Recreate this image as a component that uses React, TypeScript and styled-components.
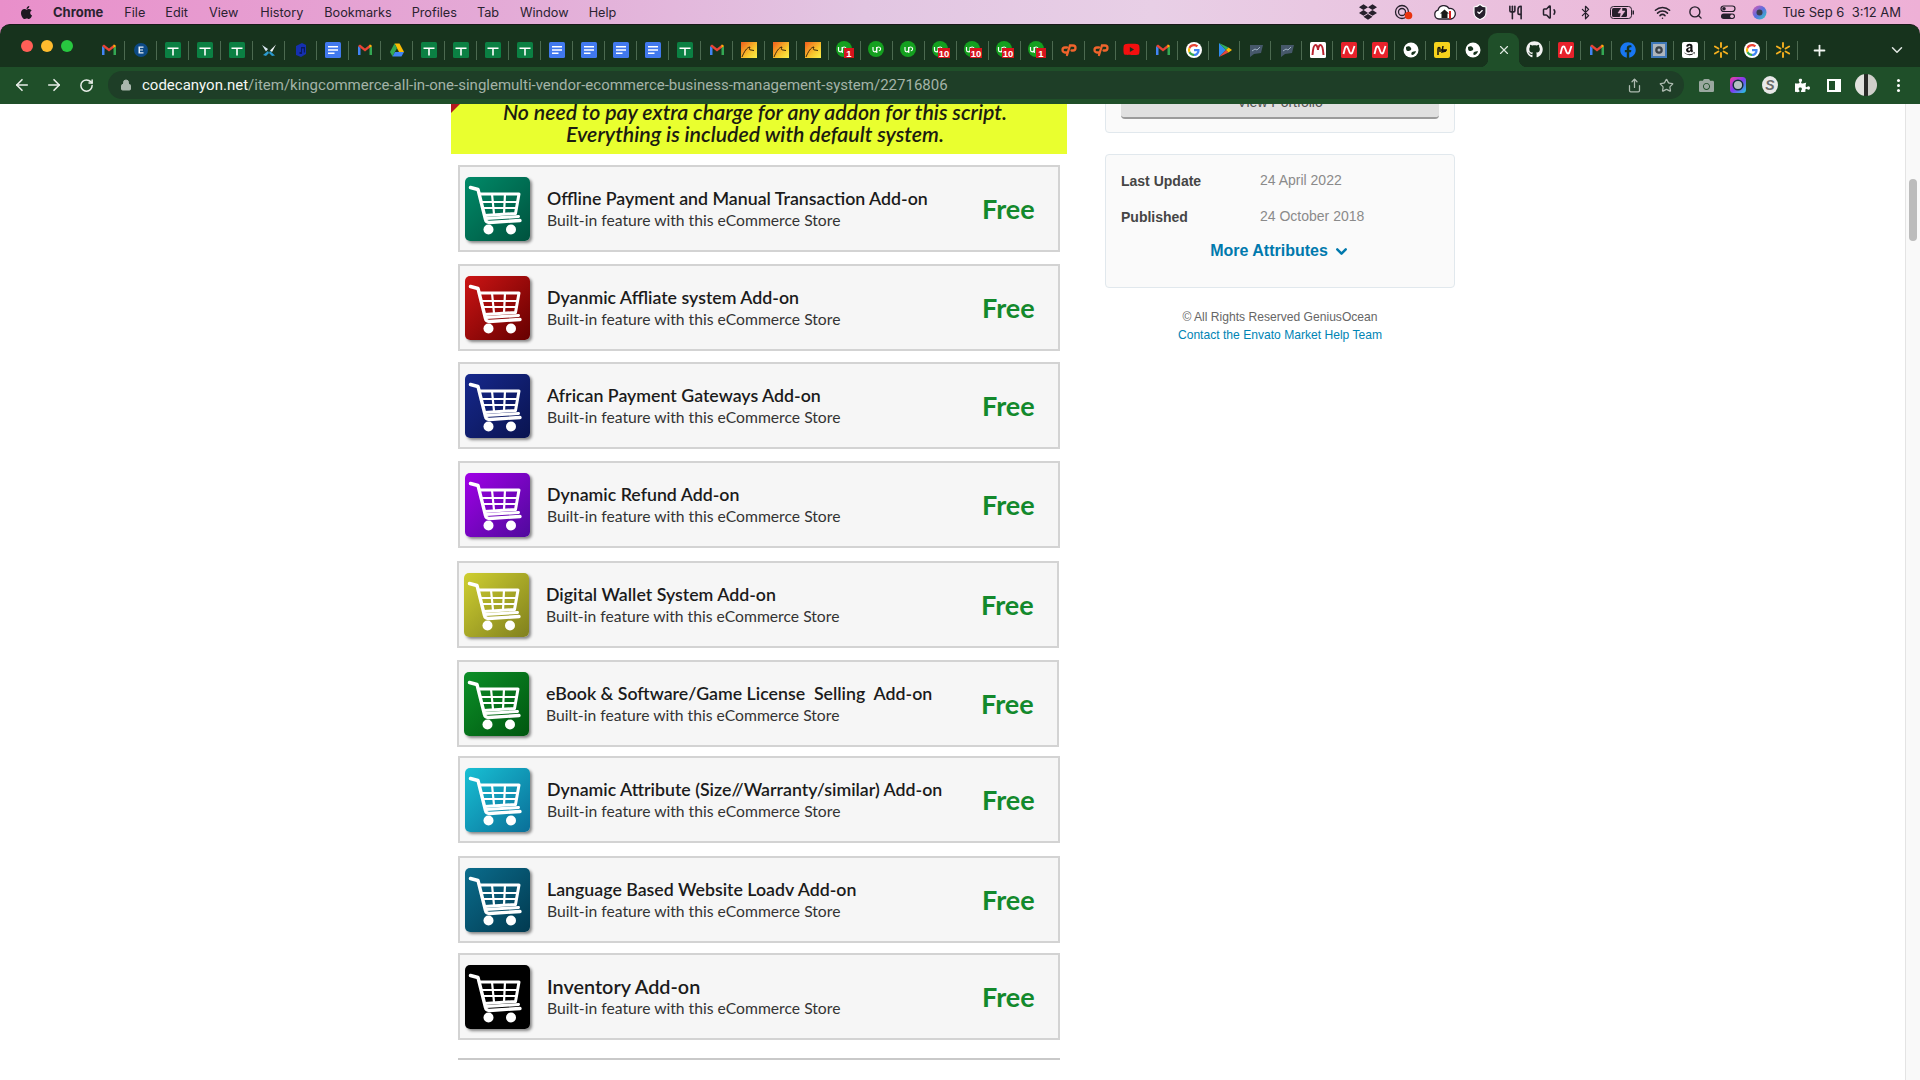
import React from "react";
import styled, { createGlobalStyle } from "styled-components";
import { FaApple, FaDropbox, FaGithub, FaFacebook, FaAmazon, FaYoutube, FaPuzzlePiece, FaCamera } from "react-icons/fa";
import { ArrowLeft, ArrowRight, RotateCw, Lock, Share, Star, Search, Bluetooth, Volume1, Wifi, X, Plus, ChevronDown, Utensils, ShieldCheck } from "lucide-react";

const Global = createGlobalStyle`
  html, body { margin: 0; padding: 0; background: #fff; overflow: hidden; }
  #root { width: 1920px; height: 1080px; overflow: hidden; }
  * { box-sizing: border-box; }
`;

const Screen = styled.div`
  width: 1920px; height: 1080px; display: flex; flex-direction: column; overflow: hidden;
  background: linear-gradient(90deg, #e98fca 0%, #e4a9d6 25%, #e2c6e2 45%, #e8cfe6 60%, #ebbada 85%, #eeb0d6 100%);
`;
const MenuBar = styled.div`
  height: 24px; flex: none; display: flex; align-items: center; padding-left: 19px;
  font: 400 12.7px Inter, "Liberation Sans", sans-serif; color: #2a2230;
`;
const MenuItem = styled.span<{ $bold?: boolean; $gap: number }>`
  margin-left: ${p => p.$gap}px; font-weight: ${p => (p.$bold ? 700 : 400)}; font-size: ${p => (p.$bold ? 13 : 12.7)}px; white-space: nowrap;
`;
const MenuRight = styled.div`
  margin-left: auto; display: flex; align-items: center; padding-right: 19px;
`;
const MenuSlot = styled.span<{ $gap: number }>`
  width: 30px; margin-left: ${p => p.$gap}px; flex: none; display: flex; justify-content: center; align-items: center; color: #26202c;
`;
const Clock = styled.span`
  margin-left: 8px; font-size: 13px; white-space: pre;
`;
const Window = styled.div`
  flex: none; height: 80px; background: #17331d; border-top: 1px solid #1a1a1a; border-radius: 10px 10px 0 0; display: flex; flex-direction: column;
`;
const TabStrip = styled.div`
  height: 42px; flex: none; display: flex; align-items: stretch; padding-left: 21px;
`;
const Lights = styled.div`
  width: 72px; flex: none; display: flex; gap: 8px; padding-top: 15px;
`;
const Light = styled.span<{ $c: string }>`
  width: 12px; height: 12px; border-radius: 50%; background: ${p => p.$c};
`;
const Tab = styled.div<{ $w: number; $active?: boolean; $sep?: boolean }>`
  width: ${p => p.$w}px; flex: none; display: flex; align-items: center; justify-content: center; padding-top: ${p => (p.$active ? 8 : 7)}px; position: relative; color: #dfe8e0;
  ${p => p.$sep && `&:after{content:"";position:absolute;right:0;top:16px;height:19px;width:1px;background:#4c6a50;}`}
  ${p => p.$active && `
    background:#1f4f29;border-radius:9px 9px 0 0;margin-top:8px;padding-top:0;
    &:before,&:after{content:"";position:absolute;bottom:0;width:8px;height:8px;}
    &:before{left:-8px;background:radial-gradient(circle at 0 0,transparent 8px,#1f4f29 8.5px);}
    &:after{right:-8px;background:radial-gradient(circle at 100% 0,transparent 8px,#1f4f29 8.5px);}
  `}
`;
const NewTab = styled.div`
  margin-left: 13px; padding-top: 8px; display: flex; align-items: center; color: #f2f5f2;
`;
const StripEnd = styled.div`
  margin-left: auto; padding: 8px 14px 0 0; display: flex; align-items: center; color: #e2e8e3;
`;
const Toolbar = styled.div`
  height: 37px; flex: none; background: #1f4f29; display: flex; align-items: center; padding: 0 0 1px 6px; color: #e9eee9;
`;
const ToolBtn = styled.span`
  width: 32px; flex: none; display: flex; justify-content: center; align-items: center;
`;
const Omnibox = styled.div`
  width: 1576px; height: 28px; margin: 0 6px 0 6px; flex: none; background: #1e3e27; border-radius: 14px; display: flex; align-items: center; padding-left: 12px; color: #a9b7ad;
  font: 400 15px Roboto, "Liberation Sans", sans-serif;
`;
const UrlHost = styled.span` color: #f4f7f4; margin-left: 10px; `;
const UrlPath = styled.span` color: #a4b3a8; `;
const OmniIcons = styled.div` margin-left: auto; display: flex; padding-right: 2px; color: #aebbb1; `;
const Page = styled.div`
  flex: 1; min-height: 0; background: #fff; display: flex; overflow: hidden;
`;
const MainCol = styled.div`
  width: 616px; margin: -20px 0 0 451px; flex: none; display: flex; flex-direction: column;
`;
const Banner = styled.div`
  height: 70px; position: relative; background: #e9ff2f; display: flex; flex-direction: column; justify-content: flex-end; padding: 0 8px 9px 0;
  font: italic 600 21.3px/22px Lato, "Liberation Sans", sans-serif; color: #1c1c10; text-align: center;
`;
const Ribbon = styled.span`
  position: absolute; left: 0; top: 20px; width: 0; height: 0; border-top: 9px solid #b3171f; border-right: 9px solid transparent;
`;
const Card = styled.div<{ $top: number; $left: number }>`
  width: 602px; height: 87px; flex: none; margin: ${p => p.$top}px 0 0 ${p => 7 - p.$left}px; border: 2px solid #d3d3d3; background: #f6f6f6;
  display: flex; align-items: flex-start; padding: 10px 0 0 5px;
`;
const IconTile = styled.div<{ $from: string; $to: string }>`
  width: 65px; height: 64px; flex: none; border-radius: 5px; background: linear-gradient(135deg, ${p => p.$from}, ${p => p.$to});
  box-shadow: 2px 2px 3px rgba(0,0,0,.45); display: flex;
`;
const CardText = styled.div`
  flex: 1; margin-left: 17px; padding-top: 10px; font-family: Lato, "Liberation Sans", sans-serif;
`;
const CardTitle = styled.div<{ $size: number }>`
  font-size: ${p => p.$size}px; line-height: 22px; font-weight: 600; color: #1b1b1b; white-space: pre;
`;
const CardSub = styled.div`
  font-size: 15.7px; line-height: 22px; color: #333; white-space: nowrap;
`;
const Price = styled.div`
  width: 76px; flex: none; padding-top: 17px; font: 700 27px/30px Lato, "Liberation Sans", sans-serif; color: #13892c;
`;
const Rule = styled.div`
  margin: 18px 0 0 7px; width: 602px; height: 2px; background: #c9c9c9; flex: none;
`;
const Side = styled.div`
  width: 350px; margin: -33px 0 0 38px; flex: none; display: flex; flex-direction: column;
  font-family: "Liberation Sans", Arial, sans-serif;
`;
const Panel = styled.div`
  border: 1px solid #e1e8ed; border-radius: 4px; background: #fafafa; padding: 11px 15px 13px;
`;
const PortfolioBtn = styled.div`
  height: 36px; border-radius: 4px; background: #e0e0e0; border-bottom: 2px solid #9b9b9b; color: #555; font-size: 14px; line-height: 38px; text-align: center;
`;
const AttrPanel = styled(Panel)`
  margin-top: 21px; height: 134px; padding: 8px 15px 0;
`;
const AttrRow = styled.div`
  height: 36px; display: flex; align-items: center; font-size: 14px;
`;
const AttrLabel = styled.span`
  width: 139px; flex: none; font-weight: 700; color: #454545;
`;
const AttrValue = styled.span`
  color: #8a8a8a; font-size: 14px; margin-top: -2px;
`;
const MoreLink = styled.div`
  height: 31px; display: flex; justify-content: center; align-items: center; gap: 5px; padding-top: 1px; color: #0079ad; font-size: 16px; font-weight: 700;
`;
const Foot = styled.div`
  margin-top: 20px; text-align: center; font-size: 12.1px; line-height: 18px; color: #666;
`;
const FootLink = styled.div` color: #0084b4; `;
const ScrollTrack = styled.div`
  width: 15px; margin-left: auto; flex: none; background: #f9f9f9; border-left: 1px solid #e4e4e4; padding: 75px 3px 0 3px;
`;
const ScrollThumb = styled.div`
  height: 62px; border-radius: 4px; background: #bcbcbc;
`;

const Cart = () => (
  <svg width="65" height="64" viewBox="0 0 65 64" fill="none" stroke="#fff" strokeWidth="3" strokeLinejoin="round" strokeLinecap="round">
    <path d="M5.500 10.500 13 12.500 20.500 42.500C21 45 22.500 45.500 24.500 45.500L55 43.500" strokeWidth="3.400" />
    <path d="M14.500 17H54L50.500 36.500 19.500 38.500" />
    <path d="M17 25H52.500M19 31H51M27 17 29 37M40 17 39 37" strokeWidth="2.200" />
    <path d="M21 41.500 53.500 39.500" />
    <circle cx="23.500" cy="52.500" r="5" fill="#fff" stroke="none" />
    <circle cx="46" cy="52.500" r="5" fill="#fff" stroke="none" />
  </svg>
);

const Gmail = () => (
  <svg width="16" height="16" viewBox="0 0 16 16">
    <path d="M1 4v9h2.500V6z" fill="#4285f4" />
    <path d="M15 4v9h-2.500V6z" fill="#34a853" />
    <path d="M1 4 8 9.500 15 4 13 2.500 8 6.500 3 2.500z" fill="#ea4335" />
    <path d="M12.500 6 15 4 13 2.500 12.500 3z" fill="#fbbc04" />
  </svg>
);
const Sheet = () => (
  <svg width="16" height="16" viewBox="0 0 16 16">
    <rect width="16" height="16" rx="1.500" fill="#0b8043" />
    <path d="M2.500 5.500h11v1.500h-4.700v6.500h-1.600v-6.500h-4.700z" fill="#fff" />
  </svg>
);
const Doc = () => (
  <svg width="16" height="16" viewBox="0 0 16 16">
    <rect width="16" height="16" rx="1.500" fill="#4179ee" />
    <path d="M3 4h10v1.500H3zM3 7.200h10v1.500H3zM3 10.400h6.500v1.500H3z" fill="#fff" />
  </svg>
);
const Envato = () => (
  <svg width="16" height="16" viewBox="0 0 16 16">
    <circle cx="8" cy="8" r="7" fill="#0c4a86" />
    <path d="M5.500 4.500h5v1.300H7v1.600h3v1.200H7v1.600h3.500v1.300h-5z" fill="#e8f0f8" />
  </svg>
);
const Butterfly = () => (
  <svg width="16" height="16" viewBox="0 0 16 16">
    <path d="M1 3 7 7 5 9.500z" fill="#dbe8f2" /><path d="M15 2.500 9 8.500 11 10z" fill="#f2f6f9" />
    <path d="M2 13 7 9l1 2-3 3z" fill="#2a9ad0" /><path d="M14 13.500 9 9l-1 2 3 3z" fill="#2a9ad0" />
  </svg>
);
const Music = () => (
  <svg width="16" height="16" viewBox="0 0 16 16">
    <path d="M3 4 9 1l4 2v9l-5 3-5-2z" fill="#1530b0" /><path d="M8 5h4v5.500h-1.200V6.500H9v5.500H6.500v-2H8z" fill="#0a1a60" />
  </svg>
);
const Drive = () => (
  <svg width="16" height="16" viewBox="0 0 16 16">
    <path d="M5.500 1.500h5L15 10h-5z" fill="#fbbc04" /><path d="M5.500 1.500 1 10l2.500 4.500L8 6z" fill="#34a853" /><path d="M3.500 14.500h9L15 10H6z" fill="#4285f4" />
  </svg>
);
const Flame = () => (
  <svg width="16" height="16" viewBox="0 0 16 16">
    <defs><linearGradient id="fl" x1="0" y1="0" x2="1" y2="1"><stop offset="0" stopColor="#f25d1c" /><stop offset=".6" stopColor="#f7c52c" /><stop offset="1" stopColor="#f9f04a" /></linearGradient></defs>
    <rect width="16" height="16" fill="url(#fl)" />
    <path d="M1 15C3 10 6 5 9 5c-1 2-1 3 1 3l3 .5" stroke="#2a1a08" strokeWidth=".9" fill="none" />
  </svg>
);
const Upwork = ({ n }: { n?: string }) => (
  <svg width="18" height="18" viewBox="0 0 18 18">
    <circle cx="8" cy="8" r="8" fill="#14a01f" />
    <path d="M3.500 6v3a1.800 1.800 0 0 0 3.600 0V6M7.300 12V7.800a1.900 1.900 0 1 1 2 2" stroke="#fff" strokeWidth="1.200" fill="none" transform={n ? "translate(-1 0)" : "translate(1.500 0)"} />
    {n && <rect x={n.length > 1 ? 6 : 8} y="7" width={n.length > 1 ? 12 : 10} height="10" fill="#d7141d" />}
    {n && <text x={n.length > 1 ? 12 : 13} y="15.500" textAnchor="middle" fontSize="9.500" fontWeight="700" fontFamily="Liberation Sans" fill="#fff">{n}</text>}
  </svg>
);
const Cp = () => (
  <svg width="16" height="16" viewBox="0 0 16 16" fill="none" stroke="#f0642c" strokeWidth="2.300" strokeLinecap="round">
    <path d="M6 5.500H4a2.500 2.500 0 0 0 0 5h1.500" /><path d="M6 13 9 3.500h3a2.500 2.500 0 0 1 0 5h-1.500" />
  </svg>
);
const GoogleG = () => (
  <svg width="16" height="16" viewBox="0 0 16 16">
    <circle cx="8" cy="8" r="8" fill="#fff" />
    <path d="M8 7v2.200h3.300C11 10.700 9.700 11.800 8 11.800V14c3.200 0 5.600-2.300 5.600-5.800 0-.4 0-.8-.1-1.200z" fill="#4285f4" />
    <path d="M4.300 9.300 2.600 10.800C3.600 12.800 5.600 14 8 14v-2.200c-1.700 0-3.100-1-3.700-2.500z" fill="#34a853" />
    <path d="M4.300 6.700 2.600 5.200a6 6 0 0 0 0 5.600l1.700-1.500a4 4 0 0 1 0-2.600z" fill="#fbbc04" />
    <path d="M8 4.200c1 0 1.900.4 2.600 1l1.600-1.600C11.100 2.600 9.700 2 8 2 5.600 2 3.600 3.200 2.600 5.200l1.700 1.500C4.900 5.200 6.300 4.200 8 4.200z" fill="#ea4335" />
  </svg>
);
const Play = () => (
  <svg width="16" height="16" viewBox="0 0 16 16">
    <path d="M2 1v14l7-7z" fill="#2f8cf0" /><path d="M2 1 9 8l2.500-2.500z" fill="#30b060" /><path d="M2 15 9 8l2.500 2.500z" fill="#e8453c" /><path d="M11.500 5.500 15 8l-3.500 2.500L9 8z" fill="#fbbc04" />
  </svg>
);
const ChartFav = () => (
  <svg width="16" height="16" viewBox="0 0 16 16">
    <path d="M2 3h13l-2 8-7 1-4 3z" fill="#46586a" /><path d="M4 9l3-2 2 1 3-3" stroke="#9fb2c2" strokeWidth="1" fill="none" />
  </svg>
);
const Mcd = () => (
  <svg width="16" height="16" viewBox="0 0 16 16">
    <rect width="16" height="16" rx="1.500" fill="#fff" />
    <path d="M2.500 13C3 6 4 3 5.500 3S8 6 8 8c0-2 1-5 2.500-5S13 6 13.500 13" stroke="#b8232f" strokeWidth="2" fill="none" />
  </svg>
);
const Nc = () => (
  <svg width="16" height="16" viewBox="0 0 16 16">
    <rect width="16" height="16" rx="1.500" fill="#e8222b" />
    <path d="M2.500 12 4 6c.6-2 2.500-2 3 0l1.500 4c.6 2 2.500 2 3 0L13.500 4" stroke="#fff" strokeWidth="1.800" fill="none" />
  </svg>
);
const Globe = () => (
  <svg width="16" height="16" viewBox="0 0 16 16">
    <circle cx="8" cy="8" r="7.500" fill="#fff" />
    <path d="M3 5c2-1 4-1 5 1s-1 3-3 3-2-2-2-4zM9 10c2-1 4-1 4-.5S11 13 9.500 13 8 11 9 10z" fill="#16331d" />
  </svg>
);
const YellowFav = () => (
  <svg width="16" height="16" viewBox="0 0 16 16">
    <rect width="16" height="16" rx="2" fill="#f6d31c" />
    <path d="M4 13V7c0-2 2-2 2 0v3M7 8h6M9 4l-1 6 4-1" stroke="#111" strokeWidth="1.500" fill="none" />
  </svg>
);
const Vault = () => (
  <svg width="16" height="16" viewBox="0 0 16 16">
    <rect width="16" height="16" fill="#3f78b8" /><rect x="2" y="2" width="12" height="12" fill="#aeb6bd" /><circle cx="8" cy="8" r="3.800" fill="#3a4248" /><circle cx="8" cy="8" r="1.500" fill="#aeb6bd" />
  </svg>
);
const Tile = styled.span`
  width: 16px; height: 16px; background: #fff; border-radius: 2px; display: flex; align-items: center; justify-content: center;
`;
const AmazonFav = () => (
  <Tile><FaAmazon size={13} color="#111" /></Tile>
);
const Walmart = () => (
  <svg width="16" height="16" viewBox="0 0 16 16" stroke="#f5b01f" strokeWidth="1.900" strokeLinecap="round">
    <path d="M8 1v4M8 11v4M1.900 4.500 5.400 6.500M10.600 9.500 14.100 11.500M1.900 11.500 5.400 9.500M10.600 6.500 14.100 4.500" />
  </svg>
);

const icons: Record<string, React.ReactNode> = {
  gmail: <Gmail />, sheet: <Sheet />, doc: <Doc />, env: <Envato />, fly: <Butterfly />, music: <Music />, drive: <Drive />, flame: <Flame />,
  up: <Upwork />, up1: <Upwork n="1" />, up10: <Upwork n="10" />, cp: <Cp />, yt: <FaYoutube size={17} color="#f40f0f" />, g: <GoogleG />, play: <Play />,
  chart: <ChartFav />, mcd: <Mcd />, nc: <Nc />, globe: <Globe />, yellow: <YellowFav />, gh: <FaGithub size={17} color="#f2f2f2" />, fb: <FaFacebook size={16} color="#1877f2" />,
  vault: <Vault />, amz: <AmazonFav />, wm: <Walmart />, close: <X size={14} strokeWidth={2} />,
};

const tabs = [
  "gmail", "env", "sheet", "sheet", "sheet", "fly", "music", "doc", "gmail", "drive", "sheet", "sheet", "sheet", "sheet", "doc", "doc", "doc", "doc", "sheet", "gmail",
  "flame", "flame", "flame", "up1", "up", "up", "up10", "up10", "up10", "up1", "cp", "cp", "yt", "gmail", "g", "play", "chart", "chart", "mcd", "nc", "nc", "globe", "yellow", "globe",
  "close", "gh", "nc", "gmail", "fb", "vault", "amz", "wm", "g", "wm",
];

const menus: [string, number, boolean?][] = [
  ["Chrome", 19, true], ["File", 21], ["Edit", 20], ["View", 21], ["History", 22], ["Bookmarks", 21], ["Profiles", 20], ["Tab", 20], ["Window", 21], ["Help", 20],
];

const addons = [
  { t: "Offline Payment and Manual Transaction Add-on", a: "#008a68", b: "#00523e", top: 11, left: 0, size: 17.75 },
  { t: "Dyanmic Affliate system Add-on", a: "#cc1414", b: "#660000", top: 12, left: 0, size: 17.75 },
  { t: "African Payment Gateways Add-on", a: "#16288c", b: "#0a1450", top: 11, left: 0, size: 17.75 },
  { t: "Dynamic Refund Add-on", a: "#a000e6", b: "#4f0a9c", top: 12, left: 0, size: 17.75 },
  { t: "Digital Wallet System Add-on", a: "#cfcf30", b: "#80801e", top: 13, left: 1, size: 17.75 },
  { t: "eBook & Software/Game License  Selling  Add-on", a: "#0c8f28", b: "#00560f", top: 12, left: 1, size: 17.75 },
  { t: "Dynamic Attribute (Size//Warranty/similar) Add-on", a: "#18c0d4", b: "#0a6f98", top: 9, left: 0, size: 17.75 },
  { t: "Language Based Website Loadv Add-on", a: "#0a6c8c", b: "#023a50", top: 13, left: 0, size: 17.75 },
  { t: "Inventory Add-on", a: "#000", b: "#000", top: 10, left: 0, size: 19.8 },
];

const BoltBattery = () => (
  <svg width="25" height="13" viewBox="0 0 25 13">
    <rect x=".5" y=".5" width="21" height="12" rx="3" fill="none" stroke="#26202c" />
    <rect x="2" y="2" width="15" height="9" rx="1.500" fill="#26202c" />
    <path d="M12 1 8 7h3l-1 5 5-7h-3z" fill="#eab8d8" stroke="#eab8d8" strokeWidth=".5" />
    <rect x="22.500" y="4.500" width="1.500" height="4" fill="#26202c" />
  </svg>
);
const Toggles = () => (
  <svg width="16" height="15" viewBox="0 0 16 15">
    <rect x="1" y="1" width="14" height="5.500" rx="2.700" fill="none" stroke="#26202c" strokeWidth="1.200" /><circle cx="4" cy="3.700" r="1.800" fill="#26202c" />
    <rect x="1" y="8.500" width="14" height="5.500" rx="2.700" fill="#26202c" /><circle cx="12" cy="11.200" r="1.800" fill="#eab8d8" />
  </svg>
);
const Siri = () => (
  <svg width="15" height="15" viewBox="0 0 15 15">
    <defs><linearGradient id="si" x1="0" y1="0" x2="1" y2="1"><stop offset="0" stopColor="#e05ab0" /><stop offset=".5" stopColor="#5a6ee0" /><stop offset="1" stopColor="#30d0c0" /></linearGradient></defs>
    <circle cx="7.500" cy="7.500" r="7" fill="url(#si)" /><circle cx="7.500" cy="7.500" r="3" fill="#3a4050" />
  </svg>
);
const Scribble = () => (
  <svg width="20" height="17" viewBox="0 0 20 17" fill="none" stroke="#26202c" strokeWidth="1.300">
    <circle cx="8" cy="8" r="6.500" /><circle cx="8" cy="8" r="3.500" /><circle cx="14.500" cy="11.500" r="3.800" fill="#e8330f" stroke="none" />
  </svg>
);
const CloudHome = () => (
  <svg width="24" height="18" viewBox="0 0 24 18">
    <path d="M6 16a4.500 4.500 0 0 1-1-8.800A6 6 0 0 1 16 5.500 5.300 5.300 0 0 1 18 16z" fill="#fff" stroke="#26202c" strokeWidth="1.300" />
    <path d="M7 10.500 11.500 6.500 16 10.500H14.500V15H8.500V10.500z" fill="#1a1a1a" /><rect x="16" y="8" width="2" height="8" fill="#d81e1e" />
  </svg>
);
const Ring = () => (
  <svg width="16" height="16" viewBox="0 0 16 16">
    <defs><linearGradient id="rg" x1="0" y1="0" x2="1" y2="1"><stop offset="0" stopColor="#f53ca0" /><stop offset=".5" stopColor="#7d3cf0" /><stop offset="1" stopColor="#20d0e0" /></linearGradient></defs>
    <rect width="16" height="16" rx="3.500" fill="url(#rg)" /><circle cx="8" cy="8" r="4.800" fill="#b6c0c4" stroke="#12303a" strokeWidth="1.500" />
  </svg>
);
const SBadge = styled.span`
  width: 16px; height: 18px; border-radius: 50%; background: #e8e8e8; color: #6a6a6a; font: italic 700 14px/18px "Liberation Sans", sans-serif; text-align: center;
`;
const SidePanelIcon = styled.span`
  width: 14px; height: 13px; border: solid #fff; border-width: 2px 6px 2px 2px;
`;
const Avatar = styled.span`
  width: 22px; height: 22px; border-radius: 50%; background: linear-gradient(90deg, #e2e2de 0 40%, #2a2a28 40% 60%, #cfcfca 60% 100%);
`;
const Dots = styled.span`
  width: 3px; height: 3px; border-radius: 50%; background: #fff; box-shadow: 0 -5px 0 #fff, 0 5px 0 #fff;
`;

export default function App() {
  return (
    <Screen>
      <Global />
      <MenuBar>
        <FaApple size={15} color="#1c1820" />
        {menus.map(([m, g, b]) => <MenuItem key={m} $gap={g} $bold={b}>{m}</MenuItem>)}
        <MenuRight>
          <MenuSlot $gap={0}><FaDropbox size={18} /></MenuSlot>
          <MenuSlot $gap={6}><Scribble /></MenuSlot>
          <MenuSlot $gap={11}><CloudHome /></MenuSlot>
          <MenuSlot $gap={5}><ShieldCheck size={18} fill="#26202c" stroke="#fff" strokeWidth={1.500} /></MenuSlot>
          <MenuSlot $gap={5}><Utensils size={15} strokeWidth={2.500} /></MenuSlot>
          <MenuSlot $gap={6}><Volume1 size={18} /></MenuSlot>
          <MenuSlot $gap={4}><Bluetooth size={15} /></MenuSlot>
          <MenuSlot $gap={7}><BoltBattery /></MenuSlot>
          <MenuSlot $gap={10}><Wifi size={17} strokeWidth={2.200} /></MenuSlot>
          <MenuSlot $gap={3}><Search size={15} strokeWidth={2.200} /></MenuSlot>
          <MenuSlot $gap={3}><Toggles /></MenuSlot>
          <MenuSlot $gap={1}><Siri /></MenuSlot>
          <Clock>Tue Sep 6  3:12 AM</Clock>
        </MenuRight>
      </MenuBar>
      <Window>
        <TabStrip>
          <Lights>
            <Light $c="#ff5f57" /><Light $c="#febc2e" /><Light $c="#28c840" />
          </Lights>
          {tabs.map((k, i) => (
            <Tab key={i} $w={i <= 30 ? 32 : 31} $active={k === "close"} $sep={k !== "close" && tabs[i + 1] !== "close"}>
              {icons[k]}
            </Tab>
          ))}
          <NewTab><Plus size={17} strokeWidth={2.500} /></NewTab>
          <StripEnd><ChevronDown size={18} /></StripEnd>
        </TabStrip>
        <Toolbar>
          <ToolBtn><ArrowLeft size={18} strokeWidth={2.200} /></ToolBtn>
          <ToolBtn><ArrowRight size={18} strokeWidth={2.200} /></ToolBtn>
          <ToolBtn><RotateCw size={15} strokeWidth={2.400} /></ToolBtn>
          <Omnibox>
            <Lock size={12} fill="#a9b7ad" />
            <UrlHost>codecanyon.net</UrlHost>
            <UrlPath>/item/kingcommerce-all-in-one-singlemulti-vendor-ecommerce-business-management-system/22716806</UrlPath>
            <OmniIcons>
              <ToolBtn><Share size={15} /></ToolBtn>
              <ToolBtn><Star size={15} /></ToolBtn>
            </OmniIcons>
          </Omnibox>
          <ToolBtn><FaCamera size={15} color="#9aa8a0" /></ToolBtn>
          <ToolBtn><Ring /></ToolBtn>
          <ToolBtn><SBadge>S</SBadge></ToolBtn>
          <ToolBtn><FaPuzzlePiece size={15} color="#fff" /></ToolBtn>
          <ToolBtn><SidePanelIcon /></ToolBtn>
          <ToolBtn><Avatar /></ToolBtn>
          <ToolBtn><Dots /></ToolBtn>
        </Toolbar>
      </Window>
      <Page>
        <MainCol>
          <Banner>
            <Ribbon />
            <div>No need to pay extra charge for any addon for this script.</div>
            <div>Everything is included with default system.</div>
          </Banner>
          {addons.map(a => (
            <Card key={a.t} $top={a.top} $left={a.left}>
              <IconTile $from={a.a} $to={a.b}><Cart /></IconTile>
              <CardText>
                <CardTitle $size={a.size}>{a.t}</CardTitle>
                <CardSub>Built-in feature with this eCommerce Store</CardSub>
              </CardText>
              <Price>Free</Price>
            </Card>
          ))}
          <Rule />
        </MainCol>
        <Side>
          <Panel><PortfolioBtn>View Portfolio</PortfolioBtn></Panel>
          <AttrPanel>
            <AttrRow><AttrLabel>Last Update</AttrLabel><AttrValue>24 April 2022</AttrValue></AttrRow>
            <AttrRow><AttrLabel>Published</AttrLabel><AttrValue>24 October 2018</AttrValue></AttrRow>
            <MoreLink>More Attributes <ChevronDown size={17} strokeWidth={3.500} /></MoreLink>
          </AttrPanel>
          <Foot>
            <div>© All Rights Reserved GeniusOcean</div>
            <FootLink>Contact the Envato Market Help Team</FootLink>
          </Foot>
        </Side>
        <ScrollTrack><ScrollThumb /></ScrollTrack>
      </Page>
    </Screen>
  );
}
